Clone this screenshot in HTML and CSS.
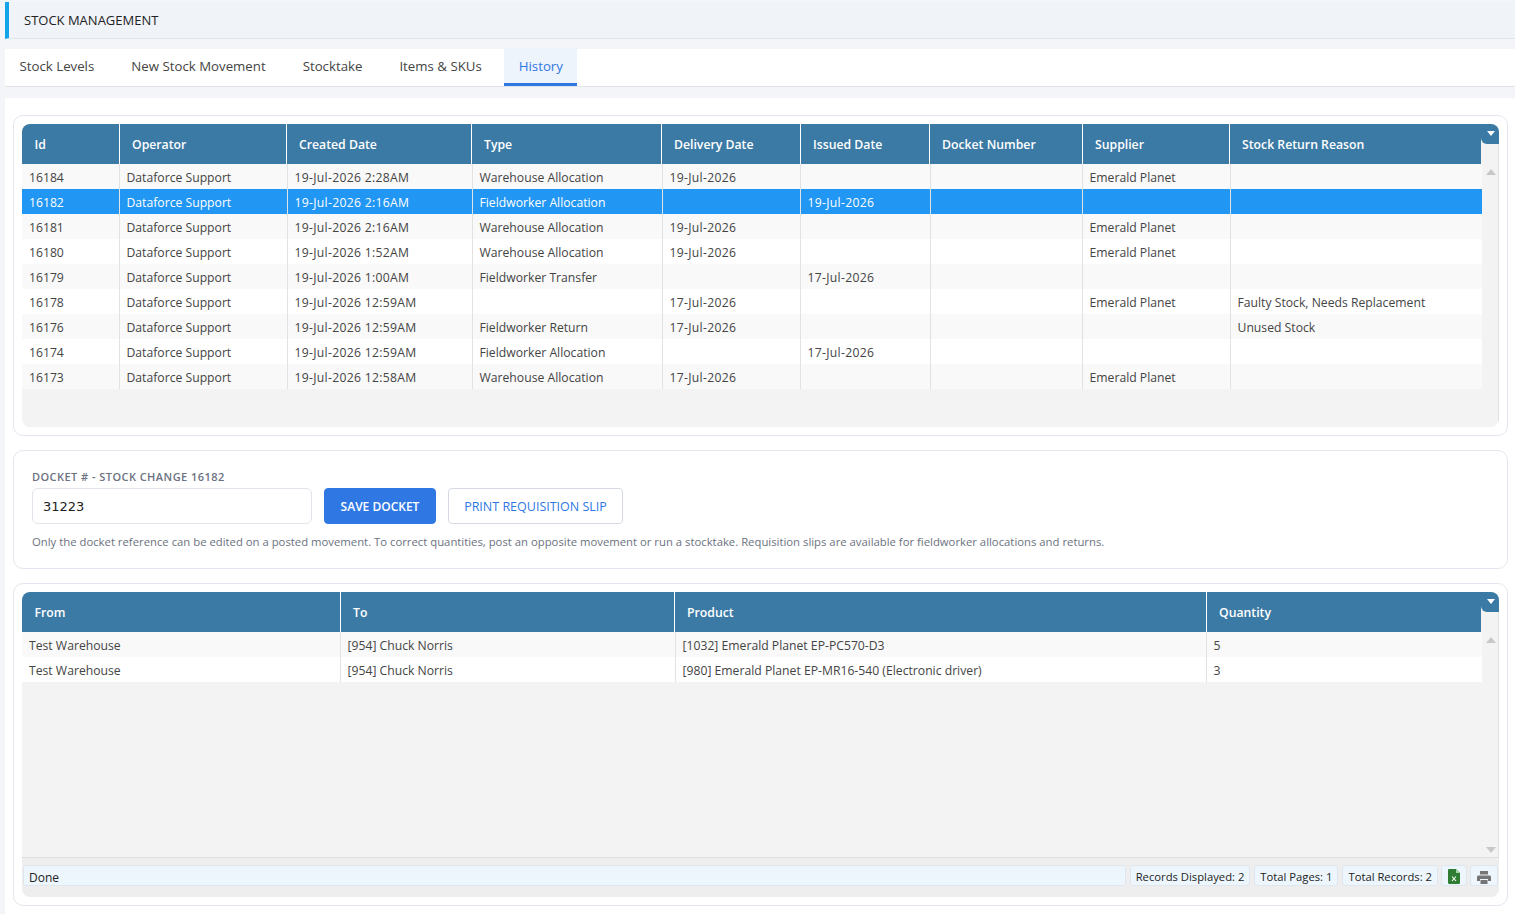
FILE: index.html
```html
<!DOCTYPE html>
<html>
<head>
	<meta charset="utf-8">
	<title>Stock Management</title>
	<link rel="stylesheet" href="styles.css">
</head>
<body>
	<div class="pageTitle">STOCK MANAGEMENT</div>
	<div class="tabs">
		<a class="tab">Stock Levels</a>
		<a class="tab">New Stock Movement</a>
		<a class="tab">Stocktake</a>
		<a class="tab">Items &amp; SKUs</a>
		<a class="tab active">History</a>
	</div>
	<div class="content">

		<div class="card">
			<div class="grid gridTop">
				<div class="gridMain">
					<table class="headTable">
						<colgroup><col class="h1"><col class="h2"><col class="h3"><col class="h4"><col class="h5"><col class="h6"><col class="h7"><col class="h8"><col></colgroup>
						<tr><th>Id</th><th>Operator</th><th>Created Date</th><th>Type</th><th>Delivery Date</th><th>Issued Date</th><th>Docket Number</th><th>Supplier</th><th>Stock Return Reason</th></tr>
					</table>
					<table class="bodyTable movements">
						<colgroup><col class="b1"><col class="b2"><col class="b3"><col class="b4"><col class="b5"><col class="b6"><col class="b7"><col class="b8"><col></colgroup>
						<tr><td>16184</td><td>Dataforce Support</td><td>19-Jul-2026 2:28AM</td><td>Warehouse Allocation</td><td>19-Jul-2026</td><td></td><td></td><td>Emerald Planet</td><td></td></tr>
						<tr class="selected"><td>16182</td><td>Dataforce Support</td><td>19-Jul-2026 2:16AM</td><td>Fieldworker Allocation</td><td></td><td>19-Jul-2026</td><td></td><td></td><td></td></tr>
						<tr><td>16181</td><td>Dataforce Support</td><td>19-Jul-2026 2:16AM</td><td>Warehouse Allocation</td><td>19-Jul-2026</td><td></td><td></td><td>Emerald Planet</td><td></td></tr>
						<tr><td>16180</td><td>Dataforce Support</td><td>19-Jul-2026 1:52AM</td><td>Warehouse Allocation</td><td>19-Jul-2026</td><td></td><td></td><td>Emerald Planet</td><td></td></tr>
						<tr><td>16179</td><td>Dataforce Support</td><td>19-Jul-2026 1:00AM</td><td>Fieldworker Transfer</td><td></td><td>17-Jul-2026</td><td></td><td></td><td></td></tr>
						<tr><td>16178</td><td>Dataforce Support</td><td>19-Jul-2026 12:59AM</td><td></td><td>17-Jul-2026</td><td></td><td></td><td>Emerald Planet</td><td>Faulty Stock, Needs Replacement</td></tr>
						<tr><td>16176</td><td>Dataforce Support</td><td>19-Jul-2026 12:59AM</td><td>Fieldworker Return</td><td>17-Jul-2026</td><td></td><td></td><td></td><td>Unused Stock</td></tr>
						<tr><td>16174</td><td>Dataforce Support</td><td>19-Jul-2026 12:59AM</td><td>Fieldworker Allocation</td><td></td><td>17-Jul-2026</td><td></td><td></td><td></td></tr>
						<tr><td>16173</td><td>Dataforce Support</td><td>19-Jul-2026 12:58AM</td><td>Warehouse Allocation</td><td>17-Jul-2026</td><td></td><td></td><td>Emerald Planet</td><td></td></tr>
					</table>
				</div>
				<div class="rail"><span class="arrowUp"></span></div>
				<div class="gridToggle"><span></span></div>
			</div>
		</div>

		<div class="card docketCard">
			<div class="docketLabel">DOCKET # - STOCK CHANGE 16182</div>
			<div class="docketRow">
				<input class="docketInput" type="text" value="31223">
				<button class="btnSave">SAVE DOCKET</button>
				<button class="btnPrint">PRINT REQUISITION SLIP</button>
			</div>
			<div class="docketNote">Only the docket reference can be edited on a posted movement. To correct quantities, post an opposite movement or run a stocktake. Requisition slips are available for fieldworker allocations and returns.</div>
		</div>

		<div class="card">
			<div class="grid gridBottom">
				<div class="gridBody">
					<div class="gridMain">
						<table class="headTable">
							<colgroup><col class="k1"><col class="k2"><col class="k3"><col></colgroup>
							<tr><th>From</th><th>To</th><th>Product</th><th>Quantity</th></tr>
						</table>
						<table class="bodyTable">
							<colgroup><col class="k1"><col class="m2"><col class="m3"><col></colgroup>
							<tr><td>Test Warehouse</td><td>[954] Chuck Norris</td><td>[1032] Emerald Planet EP-PC570-D3</td><td>5</td></tr>
							<tr><td>Test Warehouse</td><td>[954] Chuck Norris</td><td>[980] Emerald Planet EP-MR16-540 (Electronic driver)</td><td>3</td></tr>
						</table>
					</div>
					<div class="rail"><span class="arrowUp"></span><span class="arrowDown"></span></div>
					<div class="gridToggle"><span></span></div>
				</div>
				<div class="statusBar">
					<div class="statusCell statusMain">Done</div>
					<div class="statusCell">Records Displayed: 2</div>
					<div class="statusCell">Total Pages: 1</div>
					<div class="statusCell">Total Records: 2</div>
					<div class="statusCell iconCell">
						<svg width="12" height="15" viewBox="0 0 12 15"><path d="M0 1.2C0 .5.5 0 1.2 0H8l4 4v9.800c0 .7-.5 1.200-1.200 1.200H1.200C.5 15 0 14.500 0 13.800z" fill="#2e7d32"/><path d="M8 0l4 4H8z" fill="#a5d6a7"/><path d="M4 7.500l4 4.500M8 7.500l-4 4.500" stroke="#fff" stroke-width="1.100" fill="none"/></svg>
					</div>
					<div class="statusCell iconCell printCell">
						<svg width="14" height="13" viewBox="0 0 14 13"><path d="M3 0h8v3.500H3z" fill="#757575"/><path d="M1.500 4.500h11c.8 0 1.500.7 1.500 1.500v4h-3V8H3v2H0V6c0-.8.700-1.500 1.500-1.500z" fill="#757575"/><path d="M3.500 9h7v4h-7z" fill="#757575"/></svg>
					</div>
				</div>
			</div>
		</div>

	</div>
</body>
</html>
```

FILE: styles.css
```css
html, body {
	margin: 0;
	padding: 0;
}
body {
	background-color: #f3f5f9;
	padding: 2px 0 0 5px;
	font-family: "Open Sans", "Noto Sans", sans-serif;
	font-size: 12.200px;
	color: #333;
	height: 912px;
	overflow: hidden;
}
.pageTitle {
	height: 37px;
	line-height: 36px;
	border-left: 4px solid #13a4ea;
	border-bottom: 1px solid #dfe5ee;
	box-sizing: border-box;
	padding-left: 15px;
	background-color: #f0f3f8;
	color: #222;
	font-size: 13px;
}
.tabs {
	display: flex;
	gap: 8px;
	margin-top: 10px;
	height: 38px;
	box-sizing: border-box;
	background-color: #fff;
	border-bottom: 1px solid #e0e3e8;
}
.tab {
	height: 37px;
	line-height: 34px;
	padding: 0 14.500px;
	box-sizing: border-box;
	color: #444;
	font-size: 13.250px;
}
.tab.active {
	background-color: #eef4fc;
	border-bottom: 3px solid #2f78e4;
	color: #2f78e4;
}
.content {
	margin-top: 11px;
	background-color: #fff;
	padding: 17px 7px 0 8px;
	height: 816px;
	box-sizing: border-box;
	display: flex;
	flex-direction: column;
	gap: 14px;
}
.card {
	background-color: #fff;
	border: 1px solid #e3e6ee;
	border-radius: 10px;
	padding: 8px;
}
.grid {
	position: relative;
	background-color: #f3f3f3;
	border-radius: 8px;
	overflow: hidden;
}
.gridTop {
	height: 303px;
	display: flex;
}
.gridBottom {
	height: 305px;
	display: flex;
	flex-direction: column;
}
.gridBody {
	position: relative;
	flex: 1;
	display: flex;
	min-height: 0;
}
.gridMain {
	width: 1460px;
	flex: none;
}
table {
	border-collapse: collapse;
	table-layout: fixed;
}
.headTable {
	width: 1459px;
}
.bodyTable {
	width: 1460px;
}
.headTable th {
	height: 40px;
	padding: 0 0 0 12.500px;
	background-color: #3b7aa5;
	color: #fff;
	font-weight: 600;
	font-size: 12.250px;
	text-align: left;
	border-right: 1px solid #fff;
	box-sizing: border-box;
}
.headTable th:last-child {
	border-right: none;
}
.bodyTable td {
	height: 25px;
	padding: 2px 0 0 7px;
	border-right: 1px solid #e2e2e2;
	box-sizing: border-box;
	white-space: nowrap;
	overflow: hidden;
	color: #444;
}
.bodyTable td:last-child {
	border-right: none;
}
.bodyTable tr:nth-child(odd) td {
	background-color: #f9f9f9;
}
.bodyTable tr:nth-child(even) td {
	background-color: #fff;
}
.bodyTable tr.selected td {
	background-color: #2196f3;
	color: #fff;
}
.movements td:nth-child(3),
.movements td:nth-child(5),
.movements td:nth-child(6) {
	letter-spacing: .3px;
}
.h1 { width: 97px; }
.h2 { width: 167px; }
.h3 { width: 185px; }
.h4 { width: 190px; }
.h5 { width: 139px; }
.h6 { width: 129px; }
.h7 { width: 153px; }
.h8 { width: 147px; }
.b1 { width: 97px; }
.b2 { width: 168px; }
.b3 { width: 185px; }
.b4 { width: 190px; }
.b5 { width: 138px; }
.b6 { width: 130px; }
.b7 { width: 152px; }
.b8 { width: 148px; }
.k1 { width: 318px; }
.k2 { width: 334px; }
.m2 { width: 335px; }
.k3 { width: 532px; }
.m3 { width: 531px; }
.rail {
	flex: 1;
	position: relative;
	border-right: 1px solid #e2e2e2;
}
.arrowUp {
	position: absolute;
	top: 45px;
	left: 4px;
	border-left: 5px solid transparent;
	border-right: 5px solid transparent;
	border-bottom: 6px solid #c8c8c8;
}
.arrowDown {
	position: absolute;
	bottom: 4px;
	left: 4px;
	border-left: 5px solid transparent;
	border-right: 5px solid transparent;
	border-top: 6px solid #c8c8c8;
}
.gridToggle {
	position: absolute;
	top: 0;
	right: 0;
	width: 18px;
	height: 20px;
	background-color: #3b7aa5;
	border-bottom-left-radius: 6px;
}
.gridToggle span {
	position: absolute;
	top: 7px;
	left: 6px;
	border-left: 4.500px solid transparent;
	border-right: 4.500px solid transparent;
	border-top: 5px solid #fff;
}
.docketCard {
	height: 119px;
	box-sizing: border-box;
	padding: 19px 18px 0 18px;
}
.docketLabel {
	font-size: 11px;
	font-weight: 600;
	letter-spacing: .45px;
	color: #6b7280;
	line-height: 13px;
}
.docketRow {
	display: flex;
	gap: 12px;
	margin-top: 5px;
}
.docketInput {
	width: 280px;
	height: 36px;
	box-sizing: border-box;
	border: 1px solid #dfe3ea;
	border-radius: 6px;
	padding: 0 10px;
	font-family: "DejaVu Sans", sans-serif;
	font-size: 13px;
	color: #222;
	background-color: #fff;
}
.btnSave, .btnPrint {
	height: 36px;
	border-radius: 4px;
	font-family: "Open Sans", "Noto Sans", sans-serif;
	font-size: 12px;
	font-weight: 600;
	box-sizing: border-box;
}
.btnSave {
	width: 112px;
	background-color: #2f78e4;
	border: 1px solid #2f78e4;
	color: #fff;
}
.btnPrint {
	width: 175px;
	background-color: #fff;
	border: 1px solid #d5dae3;
	color: #2f78e4;
	font-size: 12.500px;
	font-weight: 400;
}
.docketNote {
	margin-top: 10px;
	font-size: 11.320px;
	color: #6b7280;
}
.statusBar {
	flex: none;
	height: 40px;
	box-sizing: border-box;
	background-color: #eee;
	border-top: 1px solid #ddd;
	padding: 7px 1px 11px 1px;
	display: flex;
	gap: 4px;
}
.statusCell {
	background-color: #eef6fd;
	border: 1px solid #e0e6ee;
	border-radius: 3px;
	padding: 1px 5px 0 5px;
	line-height: 20px;
	font-size: 11.250px;
	color: #222;
	box-sizing: border-box;
	white-space: nowrap;
}
.statusMain {
	flex: 1;
	font-size: 12px;
	padding-top: 2px;
}
.iconCell {
	width: 26px;
	margin-left: -1px;
	padding: 3px 0 0 0;
	display: flex;
	justify-content: center;
	line-height: 1;
}
.printCell {
	width: 28px;
	padding-top: 5px;
}
```
